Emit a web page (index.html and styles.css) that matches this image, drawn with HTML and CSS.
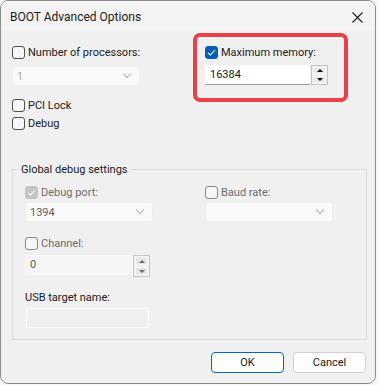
FILE: index.html
```html
<!DOCTYPE html>
<html lang="en">
<head>
  <meta charset="UTF-8">
  <title>BOOT Advanced Options</title>
  <link rel="stylesheet" href="styles.css">
</head>
<body>

<div class="window">
  <div class="titlebar">
    <span class="title">BOOT Advanced Options</span>
    <span class="close">
      <svg width="11" height="11" viewBox="0 0 11 11"><path d="M0.5 0.5 L10.5 10.5 M10.5 0.5 L0.5 10.5" stroke="#1b1b1b" stroke-width="1.1" fill="none"/></svg>
    </span>
  </div>

  <div class="content">
    <div class="top-grid">
      <div class="col">
        <label class="check"><span class="box"></span>Number of processors:</label>
        <div class="combo disabled"><span class="val light">1</span><span class="chev"></span></div>
        <label class="check pci"><span class="box"></span>PCI Lock</label>
        <label class="check debug"><span class="box"></span>Debug</label>
      </div>
      <div class="col">
        <label class="check"><span class="box checked"><svg width="11" height="11" viewBox="0 0 11 11"><path d="M2 5.8 L4.4 8 L9 3" stroke="#fff" stroke-width="1.1" fill="none"/></svg></span>Maximum memory:</label>
        <div class="spin">
          <div class="edit">16384</div>
          <div class="spin-btns">
            <span class="sbtn"><span class="arr up"></span></span>
            <span class="sbtn"><span class="arr down"></span></span>
          </div>
        </div>
      </div>
    </div>

    <fieldset class="group">
      <legend>Global debug settings</legend>
      <div class="group-grid">
        <div class="col">
          <label class="check off"><span class="box checked-off"><svg width="11" height="11" viewBox="0 0 11 11"><path d="M2 5.8 L4.4 8 L9 3" stroke="#fff" stroke-width="1.1" fill="none"/></svg></span>Debug port:</label>
          <div class="combo disabled small-gap"><span class="val">1394</span><span class="chev"></span></div>
          <label class="check off channel"><span class="box dim"></span>Channel:</label>
          <div class="spin off-spin">
            <div class="edit">0</div>
            <div class="spin-btns">
              <span class="sbtn"><span class="arr up"></span></span>
              <span class="sbtn"><span class="arr down"></span></span>
            </div>
          </div>
          <div class="usb-label">USB target name:</div>
          <div class="usb-edit"></div>
        </div>
        <div class="col">
          <label class="check off"><span class="box dim"></span>Baud rate:</label>
          <div class="combo disabled small-gap"><span class="val"></span><span class="chev"></span></div>
        </div>
      </div>
    </fieldset>

    <div class="buttons">
      <button type="button" class="default">OK</button>
      <button type="button">Cancel</button>
    </div>
  </div>

  <div class="highlight"></div>
</div>

</body>
</html>
```

FILE: styles.css
```css
body {
  margin: 0;
  padding: 0;
  background-color: #f9f9f9;
  font-family: Roboto, sans-serif;
  font-size: 11px;
  color: #1a1a1a;
}

.window {
  position: relative;
  width: 374px;
  height: 382px;
  border: 1px solid #8c8c8c;
  border-radius: 8px;
  overflow: hidden;
  background-color: #f0f0f0;
}

.titlebar {
  height: 30px;
  background-color: #f3f3f3;
  display: flex;
  align-items: center;
  justify-content: space-between;
  padding: 0 12px 0 9px;
}

.title {
  font-size: 12px;
  color: #1a1a1a;
  margin-top: 1px;
}

.close {
  display: flex;
  margin-top: 2px;
}

.content {
  padding: 0 8px 0 11px;
}

.top-grid {
  display: grid;
  grid-template-columns: 193px 1fr;
  padding-top: 13px;
}

.col {
  display: flex;
  flex-direction: column;
  align-items: flex-start;
}

.check {
  display: flex;
  align-items: center;
  height: 17px;
  line-height: 17px;
}

.box {
  width: 11px;
  height: 11px;
  border: 1px solid #505050;
  border-radius: 3px;
  background-color: #f7f7f7;
  margin-right: 3px;
  display: flex;
  align-items: center;
  justify-content: center;
}

.box.checked {
  background-color: #005fb8;
  border-color: #005fb8;
}

.box.checked-off {
  background-color: #c4c4c4;
  border-color: #c4c4c4;
}

.box.dim {
  border-color: #8a8a8a;
  background-color: #f7f7f7;
}

.check.off {
  color: #6d6d6d;
}

.combo {
  width: 122px;
  height: 18px;
  margin-top: 5px;
  border: 1px solid #eeeeee;
  border-radius: 3px;
  background-color: #f9f9f9;
  display: flex;
  align-items: center;
  justify-content: space-between;
  padding: 0 0 0 4px;
}

.combo.small-gap {
  margin-top: 1px;
}

.val {
  color: #5e5e5e;
}

.val.light {
  color: #a8a8a8;
}

.chev {
  width: 5px;
  height: 5px;
  border-right: 1px solid #b4b4b4;
  border-bottom: 1px solid #b4b4b4;
  transform: rotate(45deg);
  margin: 0 9px 4px 0;
}

.pci {
  margin-top: 11px;
}

.debug {
  margin-top: 1px;
}

.spin {
  display: flex;
  margin-top: 4px;
}

.spin .edit {
  width: 100px;
  height: 19px;
  line-height: 19px;
  padding-left: 5px;
  background-color: #fff;
  border-bottom: 1px solid #9a9a9a;
}

.spin-btns {
  display: flex;
  flex-direction: column;
  width: 15px;
  height: 18px;
  border: 1px solid #c4c4c4;
  padding: 0;
  margin-left: 1px;
}

.sbtn {
  flex: 1;
  margin: 1px;
  background-color: #e6e6e6;
  border: 1px solid #f8f8f8;
  display: flex;
  align-items: center;
  justify-content: center;
}

.arr {
  width: 0;
  height: 0;
  border-left: 3px solid transparent;
  border-right: 3px solid transparent;
}

.arr.up {
  border-bottom: 3px solid #111;
}

.arr.down {
  border-top: 3px solid #111;
}

.group {
  margin: 31px 0 0 0;
  padding: 8px 0 11px 12px;
  border: 1px solid #dcdcdc;
  border-radius: 0;
}

.group legend {
  margin-left: -6px;
  padding: 0 2px;
  font-size: 11px;
  color: #1a1a1a;
}

.group-grid {
  display: grid;
  grid-template-columns: 180px 1fr;
}

.channel {
  margin-top: 13px;
}

.off-spin {
  margin-top: 3px;
}

.off-spin .edit {
  width: 102px;
  background-color: #f5f5f5;
  border: 1px solid #f8f8f8;
  color: #5e5e5e;
  height: 18px;
  line-height: 18px;
  padding-left: 4px;
}

.off-spin .spin-btns {
  border-color: #c8c8c8;
  height: 20px;
  margin-left: 0;
}

.off-spin .arr.up {
  border-bottom-color: #6a6a6a;
}

.off-spin .arr.down {
  border-top-color: #6a6a6a;
}

.usb-label {
  margin-top: 12px;
  height: 17px;
  line-height: 17px;
}

.usb-edit {
  width: 121px;
  height: 18px;
  margin-top: 2px;
  margin-left: 1px;
  border: 1px solid #fafafa;
  background-color: #f0f0f0;
}

.buttons {
  display: flex;
  justify-content: flex-end;
  gap: 9px;
  margin-top: 12px;
  padding-right: 1px;
}

.buttons button {
  width: 73px;
  height: 21px;
  font-family: Roboto, sans-serif;
  font-size: 11px;
  color: #1a1a1a;
  background-color: #fdfdfd;
  border: 1px solid #d0d0d0;
  border-radius: 4px;
  padding: 0;
}

.buttons button.default {
  border-color: #0067c0;
}

.highlight {
  position: absolute;
  left: 192px;
  top: 32px;
  width: 147px;
  height: 61px;
  border: 4px solid #e8414a;
  border-radius: 7px;
}
```
